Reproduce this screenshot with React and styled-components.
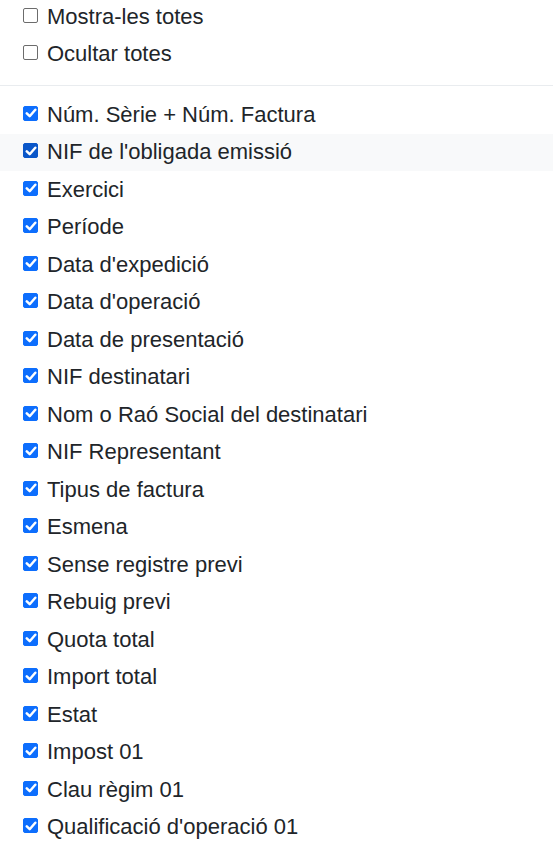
import React from 'react'
import styled, { createGlobalStyle } from 'styled-components'

const Global = createGlobalStyle`
  body {
    margin: 0;
    background: #fff;
    font-family: "Liberation Sans", Arial, sans-serif;
    color: #212529;
  }
`

const Menu = styled.div`
  margin-top: -2px;
  display: flex;
  flex-direction: column;
`

const Item = styled.label`
  display: flex;
  align-items: center;
  gap: 9px;
  height: 37.5px;
  padding-left: 23px;
  font-size: 22px;
  background: ${p => (p.$hover ? '#f8f9fa' : 'transparent')};
`

const Box = styled.span`
  width: 15px;
  height: 15px;
  box-sizing: border-box;
  border-radius: 2px;
  flex-shrink: 0;
  display: flex;
  align-items: center;
  justify-content: center;
  border: 1px solid ${p => (p.$checked ? (p.$hover ? '#0b57c9' : '#0d6efd') : '#6c6c6c')};
  background: ${p => (p.$checked ? (p.$hover ? '#0b57c9' : '#0d6efd') : '#fff')};
  margin-top: -3px;
`

const Divider = styled.hr`
  border: 0;
  border-top: 1px solid #e9ecef;
  margin: 12px 0 10px;
`

const Check = () => (
  <svg width="12" height="12" viewBox="0 0 12 12">
    <path d="M1.8 6.4 L4.7 9.2 L10.3 2.8" fill="none" stroke="#fff" strokeWidth="2.5" strokeLinecap="round" strokeLinejoin="round" />
  </svg>
)

const cols = [
  'Núm. Sèrie + Núm. Factura',
  "NIF de l'obligada emissió",
  'Exercici',
  'Període',
  "Data d'expedició",
  "Data d'operació",
  'Data de presentació',
  'NIF destinatari',
  'Nom o Raó Social del destinatari',
  'NIF Representant',
  'Tipus de factura',
  'Esmena',
  'Sense registre previ',
  'Rebuig previ',
  'Quota total',
  'Import total',
  'Estat',
  'Impost 01',
  'Clau règim 01',
  "Qualificació d'operació 01",
]

export default function App() {
  return (
    <>
      <Global />
      <Menu>
        <Item>
          <Box />
          Mostra-les totes
        </Item>
        <Item>
          <Box />
          Ocultar totes
        </Item>
        <Divider />
        {cols.map((c, i) => (
          <Item key={c} $hover={i === 1}>
            <Box $checked $hover={i === 1}>
              <Check />
            </Box>
            {c}
          </Item>
        ))}
      </Menu>
    </>
  )
}
